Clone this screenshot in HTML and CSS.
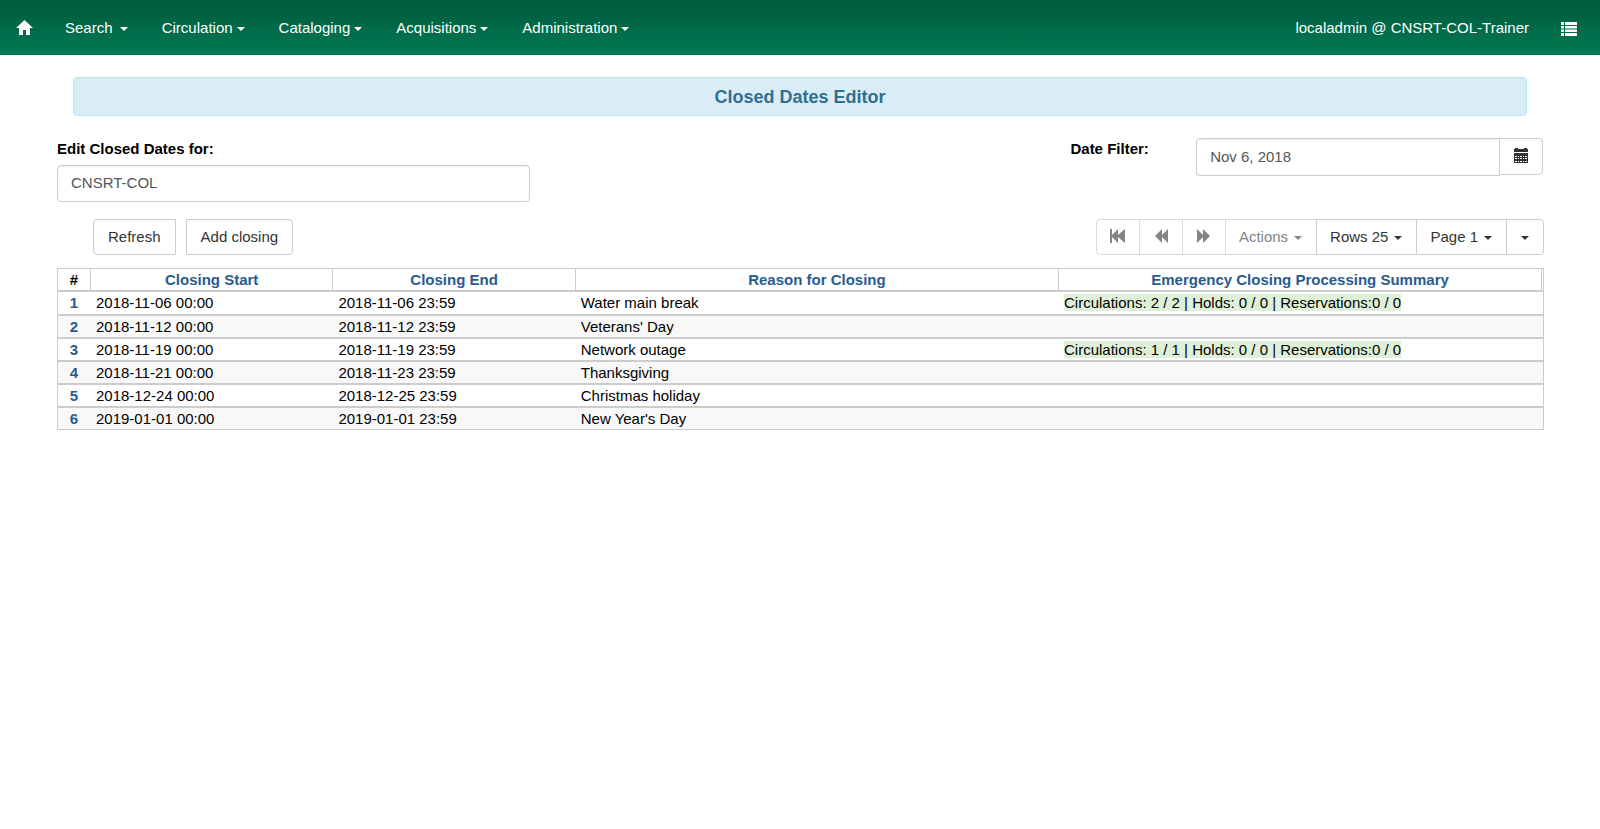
FILE: index.html
```
<!DOCTYPE html>
<html lang="en">
<head>
<meta charset="utf-8">
<title>Closed Dates Editor</title>
<link rel="stylesheet" href="styles.css">
</head>
<body>
<nav class="navbar">
  <a class="home" href="#" aria-label="Home"><svg width="17" height="15" viewBox="0 0 17 15"><path d="M8.5 0 L17 8 H14 V15 H10 V10 H7 V15 H3 V8 H0 Z" fill="currentColor"/></svg></a>
  <ul class="menu">
    <li><button type="button">Search <span class="caret"></span></button></li>
    <li><button type="button">Circulation<span class="caret"></span></button></li>
    <li><button type="button">Cataloging<span class="caret"></span></button></li>
    <li><button type="button">Acquisitions<span class="caret"></span></button></li>
    <li><button type="button">Administration<span class="caret"></span></button></li>
  </ul>
  <span class="user">localadmin @ CNSRT-COL-Trainer</span>
  <button type="button" class="list" aria-label="Menu"><svg width="16" height="14" viewBox="0 0 16 14"><path d="M0 0h3v3H0zM4 0h12v3H4zM0 4h3v2.500H0zM4 4h12v2.500H4zM0 7.500h3V10H0zM4 7.500h12V10H4zM0 11h3v3H0zM4 11h12v3H4z" fill="currentColor"/></svg></button>
</nav>
<main class="page">
  <h1 class="title">Closed Dates Editor</h1>
  <div class="filters">
    <div class="org">
      <label for="org">Edit Closed Dates for:</label>
      <input id="org" type="text" value="CNSRT-COL">
    </div>
    <div class="date">
      <label for="date">Date Filter:</label>
      <div class="date-group">
        <input id="date" type="text" value="Nov 6, 2018">
        <button type="button" class="btn" aria-label="Pick a date"><svg width="14" height="15" viewBox="0 0 14 15"><path d="M0 1h1V0h3v1h6V0h3v1h1v3H0z" fill="currentColor"/><path fill-rule="evenodd" d="M0 5h14v10H0zM1 8v1h2V8zM4 8v1h1V8zM6 8v1h2V8zM9 8v1h1V8zM11 8v1h2V8zM1 10v1h2v-1zM4 10v1h1v-1zM6 10v1h2v-1zM9 10v1h1v-1zM11 10v1h2v-1zM1 13v1h2v-1zM4 13v1h1v-1zM6 13v1h2v-1zM9 13v1h1v-1zM11 13v1h2v-1z" fill="currentColor"/></svg></button>
      </div>
    </div>
  </div>
  <div class="toolbar">
    <div class="actions">
      <button type="button" class="btn first">Refresh</button>
      <button type="button" class="btn last">Add closing</button>
    </div>
    <div class="pager">
      <button type="button" class="btn" disabled aria-label="First page"><svg width="16" height="14" viewBox="0 0 16 14"><path d="M0 0h2v6L8 0v6L15 0v14L8 8v6L2 8v6H0z" fill="currentColor"/></svg></button>
      <button type="button" class="btn" disabled aria-label="Previous page"><svg width="16" height="14" viewBox="0 0 16 14"><path d="M2 7L9 0v6l6-6v14L9 8v6z" fill="currentColor"/></svg></button>
      <button type="button" class="btn" disabled aria-label="Next page"><svg width="16" height="14" viewBox="0 0 16 14"><path d="M14 7L7 0v6L1 0v14l6-6v6z" fill="currentColor"/></svg></button>
      <button type="button" class="btn" disabled>Actions<span class="caret"></span></button>
      <button type="button" class="btn">Rows 25<span class="caret"></span></button>
      <button type="button" class="btn">Page 1<span class="caret"></span></button>
      <button type="button" class="btn" aria-label="Columns"><span class="caret"></span></button>
    </div>
  </div>
  <table class="grid">
    <colgroup><col class="c-num"><col class="c-date"><col class="c-date"><col class="c-reason"><col></colgroup>
    <thead>
      <tr><th>#</th><th><a href="#">Closing Start</a></th><th><a href="#">Closing End</a></th><th><a href="#">Reason for Closing</a></th><th><a href="#">Emergency Closing Processing Summary</a></th></tr>
    </thead>
    <tbody>
      <tr><th><a href="#">1</a></th><td>2018-11-06 00:00</td><td>2018-11-06 23:59</td><td>Water main break</td><td><span class="done">Circulations: 2 / 2 | Holds: 0 / 0 | Reservations:0 / 0</span></td></tr>
      <tr><th><a href="#">2</a></th><td>2018-11-12 00:00</td><td>2018-11-12 23:59</td><td>Veterans' Day</td><td></td></tr>
      <tr><th><a href="#">3</a></th><td>2018-11-19 00:00</td><td>2018-11-19 23:59</td><td>Network outage</td><td><span class="done">Circulations: 1 / 1 | Holds: 0 / 0 | Reservations:0 / 0</span></td></tr>
      <tr><th><a href="#">4</a></th><td>2018-11-21 00:00</td><td>2018-11-23 23:59</td><td>Thanksgiving</td><td></td></tr>
      <tr><th><a href="#">5</a></th><td>2018-12-24 00:00</td><td>2018-12-25 23:59</td><td>Christmas holiday</td><td></td></tr>
      <tr><th><a href="#">6</a></th><td>2019-01-01 00:00</td><td>2019-01-01 23:59</td><td>New Year's Day</td><td></td></tr>
    </tbody>
  </table>
</main>
</body>
</html>
```
FILE: styles.css
```
* { box-sizing: border-box; }
body {
  margin: 0;
  background: #fff;
  color: #000;
  font: 15px/21px "Liberation Sans", Arial, sans-serif;
}
button, input { font: inherit; }
button { margin: 0; cursor: pointer; }
a { color: #285c91; text-decoration: none; }
svg { display: block; }

.navbar {
  display: flex;
  align-items: center;
  height: 55px;
  padding: 0 23px 0 16px;
  color: #fff;
  background: linear-gradient(#00593d, #007a54);
}
.navbar button { padding: 0; border: 0; background: none; color: inherit; }
.home { color: inherit; }
.menu {
  display: flex;
  gap: 34px;
  margin: 0 auto 0 32px;
  padding: 0;
  list-style: none;
}
.navbar .list { margin: 2px 0 0 32px; }

.caret {
  display: inline-block;
  margin: 0 1px 0 6px;
  vertical-align: middle;
  border-top: 4px solid;
  border-left: 4px solid transparent;
  border-right: 4px solid transparent;
}
.navbar .caret { margin: 0 0 0 4px; }
.menu li:first-child .caret { margin-left: 3px; }

.page { padding: 22px 56px 0 57px; }
.title {
  margin: 0 17px 0 16px;
  padding: 9px 8px 7px;
  border: 1px solid #bce8f1;
  border-radius: 4px;
  background: #d9edf7;
  color: #31708f;
  font-size: 18px;
  line-height: 21px;
  text-align: center;
}

.filters {
  display: flex;
  justify-content: space-between;
  margin-top: 22px;
  padding-right: 1px;
}
label { font-weight: bold; }
.org { width: 31.8%; }
.org label { display: block; margin-bottom: 6px; }
input {
  display: block;
  width: 100%;
  height: 37px;
  padding: 5px 13px 7px;
  border: 1px solid #ccc;
  border-radius: 4px;
  background: #fff;
  color: #555;
  box-shadow: inset 0 1px 1px rgba(0, 0, 0, .075);
}
.date { display: flex; justify-content: space-between; width: 31.8%; }
.date-group { display: flex; align-items: flex-start; width: 73.4%; }
.date-group input { height: 38px; border-radius: 4px 0 0 4px; }
.date-group .btn { height: 37px; margin-left: -1px; border-radius: 0 4px 4px 0; }

.btn {
  flex: none;
  height: 36px;
  padding: 0 14px 2px;
  border: 1px solid #ccc;
  background: #fff;
  color: #333;
}
.toolbar {
  display: flex;
  justify-content: space-between;
  margin: 17px 0 13px;
}
.actions { display: flex; gap: 10px; padding-left: 36px; }
.first { border-radius: 4px 0 0 4px; }
.last { border-radius: 0 4px 4px 0; }
.pager { display: flex; }
.pager .btn { padding: 0 13px 2px; }
.pager .btn + .btn { margin-left: -1px; }
.pager .btn:first-child { border-radius: 4px 0 0 4px; }
.pager .btn:last-child { border-radius: 0 4px 4px 0; }
.pager .btn:last-child .caret { margin-left: 1px; }
.pager .btn:disabled { color: #848484; border-color: #dbdbdb; cursor: default; }

.grid {
  width: 100%;
  table-layout: fixed;
  border-spacing: 0;
}
.c-num { width: 33px; }
.c-date { width: 16.3%; }
.c-reason { width: 32.5%; }
.grid th, .grid td {
  height: 23px;
  padding: 0 5px;
  border: solid #ccc;
  border-width: 1px 0;
  text-align: left;
}
.grid th { text-align: center; }
.grid tr > :first-child { border-left-width: 1px; }
.grid tr > :last-child { border-right-width: 1px; }
.grid thead th + th { border-left-width: 1px; }
.grid thead th:last-child { border-right: 3px double #ccc; }
.grid td { padding-left: 6px; }
.grid tbody tr:nth-child(even) { background: #f8f8f8; }
.grid tbody tr:first-child > * { padding-bottom: 1px; }
.done { background: #dff0d8; }
```
